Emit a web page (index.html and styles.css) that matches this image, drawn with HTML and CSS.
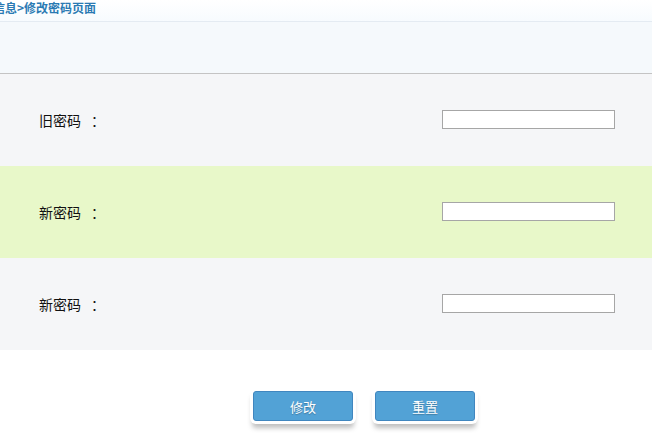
FILE: index.html
```html
<!DOCTYPE html>
<html lang="zh-CN">
<head>
<meta charset="utf-8">
<title>修改密码页面</title>
<link rel="stylesheet" href="styles.css">
</head>
<body>
<div class="crumb"><span class="crumb-text">信息&gt;修改密码页面</span></div>
<div class="band"></div>
<form class="form">
  <div class="row row-grey">
    <label class="label">旧密码<span class="colon">：</span></label>
    <input class="field" type="password">
  </div>
  <div class="row row-green">
    <label class="label">新密码<span class="colon">：</span></label>
    <input class="field" type="password">
  </div>
  <div class="row row-grey">
    <label class="label">新密码<span class="colon">：</span></label>
    <input class="field" type="password">
  </div>
  <div class="actions">
    <button class="btn" type="button">修改</button>
    <button class="btn" type="reset">重置</button>
  </div>
</form>
</body>
</html>
```
FILE: styles.css
```css
html, body {
  margin: 0;
  padding: 0;
  background: #ffffff;
  font-family: "Noto Sans CJK SC", "Liberation Sans", sans-serif;
}
body {
  overflow-x: hidden;
}
.crumb {
  height: 21px;
  border-bottom: 1px solid #e4ebf2;
  background: linear-gradient(#ffffff, #f7fbfe);
  overflow: hidden;
}
.crumb-text {
  display: block;
  margin-left: -7px;
  font-size: 12px;
  line-height: 15px;
  font-weight: bold;
  color: #2a7ab3;
  white-space: nowrap;
}
.band {
  height: 51px;
  background: #f5f9fc;
  border-bottom: 1px solid #c4c4c4;
}
.form {
  margin: 0;
}
.row {
  height: 92px;
  display: flex;
  align-items: center;
  justify-content: space-between;
  padding: 0 37px 0 39px;
}
.row-grey {
  background: #f5f6f8;
}
.row-green {
  background: #e8f8c9;
}
.label {
  font-size: 14px;
  color: #111111;
}
.colon {
  display: inline-block;
  width: 14px;
  margin-left: 10px;
}
.field {
  box-sizing: border-box;
  width: 173px;
  height: 19px;
  margin: 0 0 2px;
  border: 1px solid #a6a6a6;
  background: #ffffff;
  padding: 0 2px;
}
.actions {
  display: flex;
  gap: 22px;
  padding: 41px 0 12px 253px;
}
.btn {
  box-sizing: border-box;
  width: 100px;
  height: 30px;
  border: 1px solid #4086bf;
  border-radius: 3px;
  background: #52a2d6;
  color: #ffffff;
  font-family: "Noto Sans CJK SC", "Liberation Sans", sans-serif;
  font-size: 13px;
  text-shadow: 0 1px 1px rgba(0, 0, 0, 0.25);
  box-shadow: 0 0 0 3px #ffffff, 0 6px 5px 1px rgba(0, 0, 0, 0.25);
  cursor: pointer;
}
```
